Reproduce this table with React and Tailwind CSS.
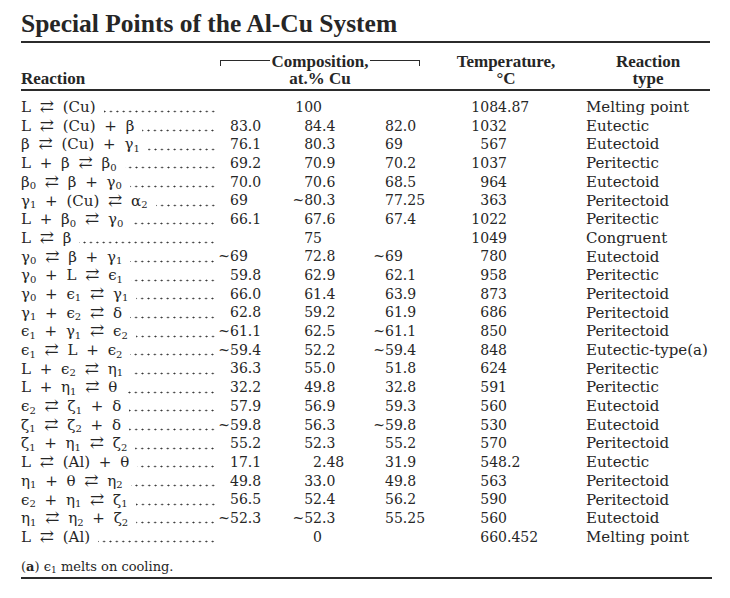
import React from 'react';

// Special points table, typeset like a handbook page
const rows = [
  ['L ⇄ (Cu)', '', '100', '', '1084.87', 'Melting point'],
  ['L ⇄ (Cu) + β', '83.0', '84.4', '82.0', '1032', 'Eutectic'],
  ['β ⇄ (Cu) + γ_1', '76.1', '80.3', '69', '567', 'Eutectoid'],
  ['L + β ⇄ β_0', '69.2', '70.9', '70.2', '1037', 'Peritectic'],
  ['β_0 ⇄ β + γ_0', '70.0', '70.6', '68.5', '964', 'Eutectoid'],
  ['γ_1 + (Cu) ⇄ α_2', '69', '~80.3', '77.25', '363', 'Peritectoid'],
  ['L + β_0 ⇄ γ_0', '66.1', '67.6', '67.4', '1022', 'Peritectic'],
  ['L ⇄ β', '', '75', '', '1049', 'Congruent'],
  ['γ_0 ⇄ β + γ_1', '~69', '72.8', '~69', '780', 'Eutectoid'],
  ['γ_0 + L ⇄ ϵ_1', '59.8', '62.9', '62.1', '958', 'Peritectic'],
  ['γ_0 + ϵ_1 ⇄ γ_1', '66.0', '61.4', '63.9', '873', 'Peritectoid'],
  ['γ_1 + ϵ_2 ⇄ δ', '62.8', '59.2', '61.9', '686', 'Peritectoid'],
  ['ϵ_1 + γ_1 ⇄ ϵ_2', '~61.1', '62.5', '~61.1', '850', 'Peritectoid'],
  ['ϵ_1 ⇄ L + ϵ_2', '~59.4', '52.2', '~59.4', '848', 'Eutectic-type(a)'],
  ['L + ϵ_2 ⇄ η_1', '36.3', '55.0', '51.8', '624', 'Peritectic'],
  ['L + η_1 ⇄ θ', '32.2', '49.8', '32.8', '591', 'Peritectic'],
  ['ϵ_2 ⇄ ζ_1 + δ', '57.9', '56.9', '59.3', '560', 'Eutectoid'],
  ['ζ_1 ⇄ ζ_2 + δ', '~59.8', '56.3', '~59.8', '530', 'Eutectoid'],
  ['ζ_1 + η_1 ⇄ ζ_2', '55.2', '52.3', '55.2', '570', 'Peritectoid'],
  ['L ⇄ (Al) + θ', '17.1', '2.48', '31.9', '548.2', 'Eutectic'],
  ['η_1 + θ ⇄ η_2', '49.8', '33.0', '49.8', '563', 'Peritectoid'],
  ['ϵ_2 + η_1 ⇄ ζ_1', '56.5', '52.4', '56.2', '590', 'Peritectoid'],
  ['η_1 ⇄ η_2 + ζ_2', '~52.3', '~52.3', '55.25', '560', 'Eutectoid'],
  ['L ⇄ (Al)', '', '0', '', '660.452', 'Melting point'],
];

// "γ_1" -> γ with subscript 1, arrow drawn a bit larger
const Formula = ({ text }) => (
  <>
    {text.split(/(_\d|⇄)/).map((part, i) => {
      if (part.startsWith('_')) {
        return (
          <sub key={i} className="text-[10px]">
            {part.slice(1)}
          </sub>
        );
      }
      if (part === '⇄') {
        return (
          <span key={i} className="text-[17px] leading-none">
            {part}
          </span>
        );
      }
      return <span key={i}>{part}</span>;
    })}
  </>
);

const splitTilde = (v) => (v.startsWith('~') ? ['~', v.slice(1)] : ['', v]);

const splitDecimal = (v) => {
  const i = v.indexOf('.');
  return i < 0 ? [v, ''] : [v.slice(0, i), v.slice(i)];
};

const Row = ({ row }) => {
  const [reaction, c1, c2, c3, temp, type] = row;
  const [pre1, num1] = splitTilde(c1);
  const [int2, frac2] = splitDecimal(c2);
  const [pre3, num3] = splitTilde(c3);
  const [intT, fracT] = splitDecimal(temp);

  return (
    <div className="flex h-[18.7px] items-center whitespace-nowrap">
      <div className="flex w-[195px] shrink-0 items-center">
        <span className="text-[15px] [word-spacing:4px]">
          <Formula text={reaction} />
        </span>
        {/* dot leader, aligned to the right edge so dots line up across rows */}
        <span className="mt-[9px] ml-[8px] h-[3px] flex-1 bg-[radial-gradient(circle,#333_0.8px,transparent_1.1px)] bg-[length:6.4px_3px] bg-[position:right_center] bg-repeat-x" />
      </div>
      <span className="w-[14px] shrink-0 text-right text-[14px]">{pre1}</span>
      <span className="w-[40px] shrink-0 text-[14px]">{num1}</span>
      <span className="w-[52px] shrink-0 text-right text-[14px]">{int2}</span>
      <span className="w-[50px] shrink-0 text-[14px]">{frac2}</span>
      <span className="w-[13px] shrink-0 text-right text-[14px]">{pre3}</span>
      <span className="w-[55px] shrink-0 text-[14px]">{num3}</span>
      <span className="w-[67px] shrink-0 text-right text-[14px]">{intT}</span>
      <span className="w-[79px] shrink-0 text-[14px]">{fracT}</span>
      <span className="text-[15px]">{type}</span>
    </div>
  );
};

export default function App() {
  return (
    <div className="h-[598px] w-[730px] bg-white text-[#262626]">
      <div className="ml-[21px] w-[691px]">
        {/* Title */}
        <h1 className="pt-[11px] font-['Liberation_Serif',serif] text-[25.5px] leading-[25px] font-bold">
          Special Points of the Al-Cu System
        </h1>
        <div className="mt-[5px] h-[2px] w-[689px] bg-[#2b2b2b]" />

        {/* Column headers */}
        <div className="flex items-end pt-[10px] pb-[2px] font-['Liberation_Serif',serif] text-[17px] leading-[17px] font-bold">
          <div className="w-[199px]">Reaction</div>
          <div className="flex w-[200px] flex-col items-center">
            <div className="flex w-full items-start">
              <span className="mt-[7px] h-[6px] flex-1 border-t border-l border-[#2b2b2b]" />
              <span className="px-[2px]">Composition,</span>
              <span className="mt-[7px] h-[6px] flex-1 border-t border-r border-[#2b2b2b]" />
            </div>
            <div>at.% Cu</div>
          </div>
          <div className="w-[172px] text-center">
            <div>Temperature,</div>
            <div>°C</div>
          </div>
          <div className="w-[112px] text-center">
            <div>Reaction</div>
            <div>type</div>
          </div>
        </div>
        <div className="h-[2px] w-[689px] bg-[#2b2b2b]" />

        {/* Body */}
        <div className="pt-[7px] font-['DejaVu_Serif','DejaVu_Sans',serif]">
          {rows.map((row, i) => (
            <Row key={i} row={row} />
          ))}
        </div>

        {/* Footnote */}
        <div className="mt-[12px] font-['DejaVu_Serif','DejaVu_Sans',serif] text-[13px] leading-[16px] whitespace-nowrap">
          (<span className="font-bold">a</span>) ϵ<sub className="text-[9px]">1</sub> melts on cooling.
        </div>
        <div className="mt-[2px] h-[2px] w-[691px] bg-[#2b2b2b]" />
      </div>
    </div>
  );
}
